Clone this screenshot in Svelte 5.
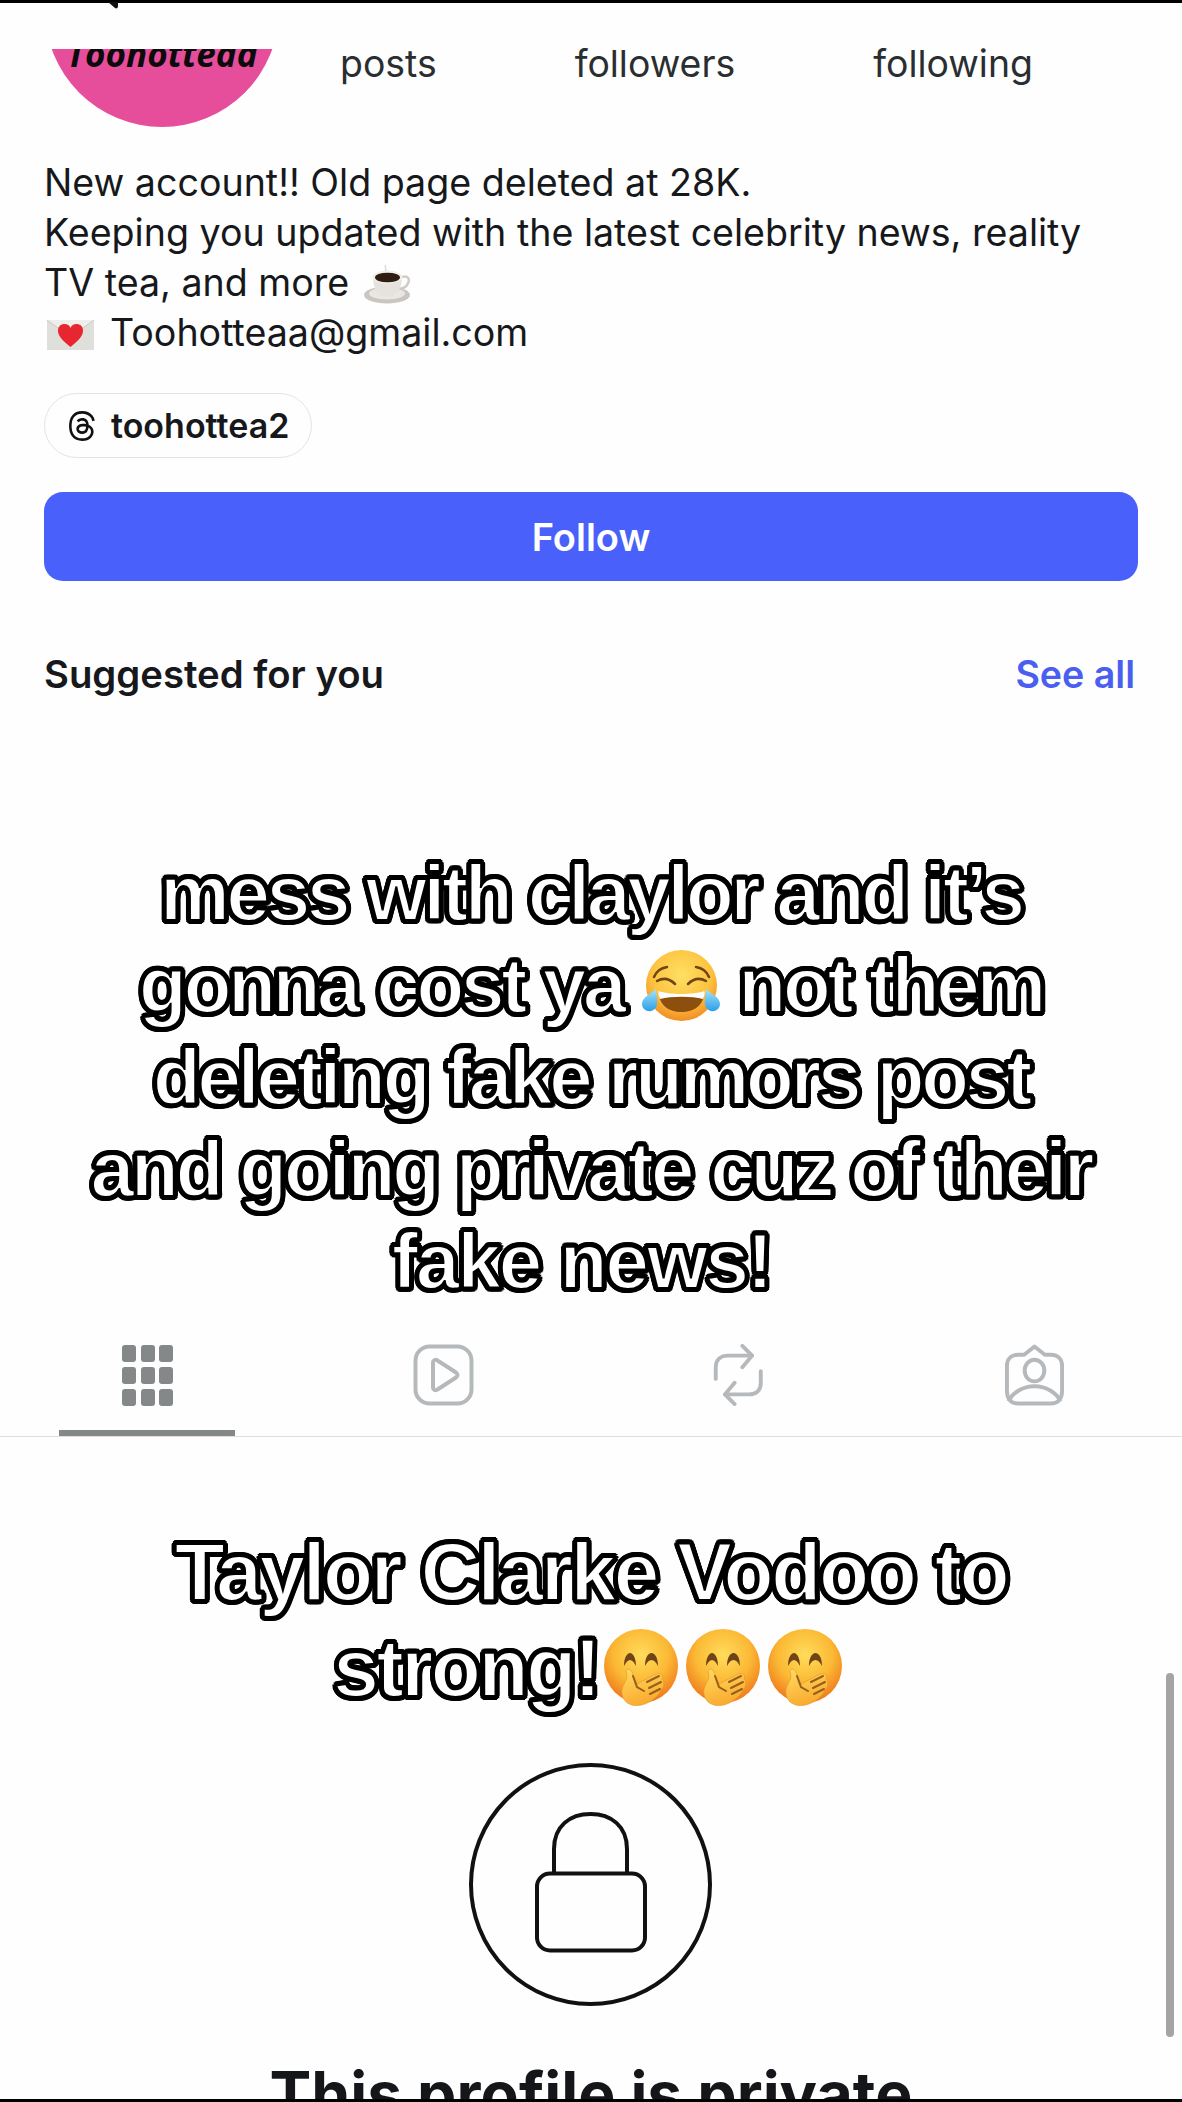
<script>
  const threads = "M141.537 88.9883C140.71 88.5919 139.87 88.2104 139.019 87.8451C137.537 60.5382 122.616 44.905 97.5619 44.745C97.4484 44.7443 97.3355 44.7443 97.222 44.7443C82.2364 44.7443 69.7731 51.1409 62.102 62.7807L75.881 72.2328C81.6116 63.5383 90.6052 61.6848 97.2286 61.6848C97.3051 61.6848 97.3819 61.6848 97.4576 61.6855C105.707 61.7381 111.932 64.1366 115.961 68.814C118.893 72.2193 120.854 76.925 121.825 82.8638C114.511 81.6207 106.601 81.2385 98.145 81.7233C74.3247 83.0954 59.0111 96.9879 60.0396 116.292C60.5615 126.084 65.4397 134.508 73.775 140.011C80.8224 144.663 89.899 146.938 99.3323 146.423C111.79 145.74 121.563 140.987 128.381 132.296C133.559 125.696 136.834 117.143 138.28 106.366C144.217 109.949 148.617 114.664 151.047 120.332C155.179 129.967 155.42 145.8 142.501 158.708C131.182 170.016 117.576 174.908 97.0135 175.059C74.2042 174.89 56.9538 167.575 45.7381 153.317C35.2355 139.966 29.8077 120.682 29.6052 96C29.8077 71.3178 35.2355 52.0336 45.7381 38.6827C56.9538 24.4249 74.2039 17.11 97.0132 16.9405C119.988 17.1113 137.539 24.4614 149.184 38.788C154.894 45.8136 159.199 54.6488 162.037 64.9503L178.184 60.6422C174.744 47.9622 169.331 37.0357 161.965 27.974C147.036 9.60668 125.202 0.195148 97.0695 0H96.9569C68.8816 0.19447 47.2921 9.6418 32.7883 28.0793C19.8819 44.4864 13.2244 67.3157 13.0007 95.9325L13 96L13.0007 96.0675C13.2244 124.684 19.8819 147.514 32.7883 163.921C47.2921 182.358 68.8816 191.806 96.9569 192H97.0695C122.03 191.827 139.624 185.292 154.118 170.811C173.081 151.866 172.51 128.119 166.26 113.541C161.776 103.087 153.227 94.5962 141.537 88.9883ZM98.4405 129.507C88.0005 130.095 77.1544 125.409 76.6196 115.372C76.2232 107.93 81.9158 99.626 99.0812 98.6368C101.047 98.5234 102.976 98.468 104.871 98.468C111.106 98.468 116.939 99.0737 122.242 100.233C120.264 124.935 108.662 128.946 98.4405 129.507Z";
  const grid = [0, 1, 2, 3, 4, 5, 6, 7, 8];
</script>

{#snippet hand()}
  <svg class="hand" viewBox="0 0 74 77" aria-hidden="true">
    <defs>
      <radialGradient id="hf" cx="50%" cy="35%" r="62%">
        <stop offset="0" stop-color="#ffdc5c" />
        <stop offset="0.6" stop-color="#fbb934" />
        <stop offset="1" stop-color="#f0801f" />
      </radialGradient>
      <linearGradient id="hh" x1="0" y1="0" x2="0.4" y2="1">
        <stop offset="0" stop-color="#ffdc62" />
        <stop offset="1" stop-color="#f9ab2f" />
      </linearGradient>
    </defs>
    <ellipse cx="37" cy="37" rx="37" ry="37" fill="url(#hf)" />
    <path d="M20 37C20 29 23 24 26 24C29 24 32 29 32 37C30 33 28 31 26 31C24 31 22 33 20 37Z" fill="#6f4417" />
    <path d="M41 37C41 29 44 24 47.500 24C51 24 54 29 54 37C52 33 50 31 47.500 31C45 31 43 33 41 37Z" fill="#6f4417" />
    <path d="M22 42C24 38 28 41 29 46L33 55L52 45C56 43 60 46 58 50C61 53 60 58 57 61C53 70 39 79 28 76C20 74 17 67 18 60C19 56 22 52 23 48Z" fill="url(#hh)" stroke="#e8902b" stroke-width="0.6" />
    <g stroke="#96601a" stroke-width="2" stroke-linecap="round" fill="none">
      <path d="M43 53L55 47" />
      <path d="M45 59L57 53" />
      <path d="M46 65L56 60" />
      <path d="M29 47L33 58L40 62" />
    </g>
  </svg>
{/snippet}

<div class="page">
  <div class="bar"></div>
  <svg class="notch" viewBox="0 0 10 7" aria-hidden="true"><path d="M0 0L7 6C8.500 7 10 6 10 4L10 0Z" fill="#111" /></svg>

  <header class="head">
    <div class="avatar">
      <div class="disc"><span>Toohotteaa</span></div>
    </div>
    <div class="stats">
      <span>posts</span>
      <span>followers</span>
      <span>following</span>
    </div>
  </header>

  <div class="bio">
    <p>New account!! Old page deleted at 28K.</p>
    <p>Keeping you updated with the latest celebrity news, reality</p>
    <p>TV tea, and more
      <svg class="coffee" viewBox="0 0 47 40" aria-hidden="true">
        <ellipse cx="23" cy="31" rx="23" ry="8.500" fill="#c9c6c1" />
        <ellipse cx="23" cy="29.500" rx="18" ry="6" fill="#e9e7e3" />
        <path d="M36 14C44 10 47 15 43 21C41 24 37 25 33 25" fill="none" stroke="#cfccc7" stroke-width="2.500" />
        <path d="M9 13C9 24 13 33 23 33C33 33 38 24 38 13Z" fill="#e6e3de" />
        <ellipse cx="23.500" cy="13" rx="15" ry="6.500" fill="#f1efeb" />
        <ellipse cx="23.500" cy="13.500" rx="12.500" ry="4.800" fill="#2f1c12" />
        <path d="M22 1C19 3 24 4 21 7" fill="none" stroke="#dcdcdc" stroke-width="1.500" />
      </svg>
    </p>
    <p class="mail">
      <svg class="env" viewBox="0 0 47 30" aria-hidden="true">
        <rect width="47" height="30" fill="#dfdfdc" />
        <path d="M0 0L23.500 17L47 0" fill="#eeeeea" stroke="#c9c9c6" stroke-width="1" />
        <path d="M23.500 27C15 20 11 16 11 10.500C11 6 14.500 4 17.500 4C20.500 4 22.500 5.500 23.500 8C24.500 5.500 26.500 4 29.500 4C32.500 4 36 6 36 10.500C36 16 32 20 23.500 27Z" fill="#e8262f" />
      </svg>
      <span>Toohotteaa@gmail.com</span>
    </p>
  </div>

  <div class="pill">
    <svg class="threads" viewBox="0 0 192 192" aria-hidden="true"><path d={threads} fill="#111" /></svg>
    <span>toohottea2</span>
  </div>

  <button class="follow" type="button">Follow</button>

  <div class="suggest">
    <span class="s-title">Suggested for you</span>
    <span class="s-link">See all</span>
  </div>

  <div class="cap cap-one">
    <div>mess with claylor and it’s</div>
    <div>gonna cost ya
      <svg class="joy" viewBox="0 0 78 71" aria-hidden="true">
        <defs>
          <radialGradient id="jf" cx="50%" cy="35%" r="65%">
            <stop offset="0" stop-color="#ffe064" />
            <stop offset="0.65" stop-color="#fcc23e" />
            <stop offset="1" stop-color="#f28c25" />
          </radialGradient>
          <linearGradient id="jt" x1="0" y1="0" x2="0" y2="1">
            <stop offset="0" stop-color="#a6e3fb" />
            <stop offset="1" stop-color="#2c9fe6" />
          </linearGradient>
        </defs>
        <circle cx="39.500" cy="35.500" r="35.500" fill="url(#jf)" />
        <path d="M17 43C27 46 52 46 62 43C62 55 52 62 39.500 62C27 62 17 55 17 43Z" fill="#8d4f0e" />
        <path d="M16.500 41C27 45 52 45 62.500 41C63 44 62 47 61 49C50 46 29 46 18 49C17 47 16 44 16.500 41Z" fill="#fff" />
        <g fill="none" stroke="#6f4417" stroke-width="2.500" stroke-linecap="round">
          <path d="M15 31C22 27 28 29 33 34" />
          <path d="M12 27C14 22 19 18 25 17" />
          <path d="M64 31C57 27 51 29 46 34" />
          <path d="M67 27C65 22 60 18 54 17" />
        </g>
        <path d="M14 39C9 44 0 47 0 54C0 59 5 62 9 61C13 60 16 56 15 50Z" fill="url(#jt)" />
        <path d="M64 39C69 44 78 47 78 54C78 59 73 62 69 61C65 60 62 56 63 50Z" fill="url(#jt)" />
      </svg>
      not them</div>
    <div>deleting fake rumors post</div>
    <div class="wide">and going private cuz of their</div>
    <div class="last">fake news!</div>
  </div>

  <nav class="tabs">
    <div class="tab active">
      <div class="gridicon">
        {#each grid as g (g)}<i></i>{/each}
      </div>
      <b></b>
    </div>
    <div class="tab">
      <svg class="ic" viewBox="0 0 61 62" aria-hidden="true">
        <rect x="2.500" y="2.500" width="56" height="57" rx="14" fill="none" stroke="#b6b9bc" stroke-width="4" />
        <path d="M20 18.500C20 16 22.500 15 24.500 16.500L43 28.500C45 30 45 32 43 33.500L24.500 45.500C22.500 47 20 46 20 43.500Z" fill="none" stroke="#b6b9bc" stroke-width="4" stroke-linejoin="round" />
      </svg>
    </div>
    <div class="tab">
      <svg class="ic" viewBox="0 0 52 64" aria-hidden="true">
        <g fill="none" stroke="#b6b9bc" stroke-width="4" stroke-linecap="round" stroke-linejoin="round">
          <path d="M2.500 36V24C2.500 16 8 12 15 12H40" />
          <path d="M30 2L40 12L30 24" />
          <path d="M49 28V40C49 48 44 52 37 52H12" />
          <path d="M22 40L12 52L22 62" />
        </g>
      </svg>
    </div>
    <div class="tab">
      <svg class="ic" viewBox="0 0 61 63" aria-hidden="true">
        <g fill="none" stroke="#b6b9bc" stroke-width="4" stroke-linejoin="round">
          <path d="M14 11H20L30.500 2.500L41 11H47C54 11 58.500 15 58.500 22V48C58.500 56 54 60.500 47 60.500H14C7 60.500 2.500 56 2.500 48V22C2.500 15 7 11 14 11Z" />
          <ellipse cx="30.500" cy="27" rx="10" ry="11" />
          <path d="M4 58C8 50 18 43 30.500 43C43 43 53 50 57 58" />
        </g>
      </svg>
    </div>
  </nav>

  <div class="cap cap-two">
    <div>Taylor Clarke Vodoo to</div>
    <div>strong!<span class="hands">{@render hand()}{@render hand()}{@render hand()}</span></div>
  </div>

  <div class="lock">
    <svg viewBox="0 0 243 243" aria-hidden="true">
      <circle cx="121.500" cy="121.500" r="119.500" fill="none" stroke="#111" stroke-width="4" />
      <path d="M85 110V86C85 63 101 51 121.500 51C142 51 158 63 158 86V110" fill="none" stroke="#111" stroke-width="4" />
      <rect x="68" y="110.500" width="108" height="77" rx="13" fill="none" stroke="#111" stroke-width="4" />
    </svg>
  </div>

  <h2 class="private">This profile is private</h2>

  <div class="scroll"></div>
  <div class="bar bottom"></div>
</div>

<style>
  :global(body) {
    margin: 0;
    background: #fefefe;
  }
  .page {
    position: relative;
    width: 1182px;
    height: 2102px;
    overflow: hidden;
    background: #fefefe;
    color: #16181b;
    font-family: Inter, "Liberation Sans", sans-serif;
  }
  .bar {
    height: 3px;
    background: #000;
  }
  .bottom {
    position: absolute;
    left: 0;
    right: 0;
    bottom: 0;
  }
  .notch {
    position: absolute;
    left: 108px;
    top: 2px;
    width: 10px;
    height: 7px;
  }
  .head {
    display: flex;
    align-items: flex-start;
    margin-top: 46px;
    height: 78px;
  }
  .avatar {
    width: 234px;
    height: 78px;
    margin-left: 45px;
    overflow: hidden;
    flex: none;
  }
  .disc {
    position: relative;
    width: 234px;
    height: 234px;
    margin-top: -156px;
    border-radius: 50%;
    background: #e64d9b;
  }
  .disc span {
    position: absolute;
    left: 0;
    right: 0;
    top: 143px;
    text-align: center;
    font: italic 700 35px/1 "Open Sans", sans-serif;
    color: #0b0b0b;
    white-space: nowrap;
  }
  .stats {
    display: flex;
    gap: 138px;
    margin-left: 61px;
    font-size: 37.400px;
    line-height: 30px;
    color: #2b2e31;
  }
  .bio {
    margin: 31px 0 0 44px;
    font-size: 37.600px;
    line-height: 50px;
  }
  .bio p {
    margin: 0;
    height: 50px;
    white-space: nowrap;
  }
  .coffee {
    width: 47px;
    height: 40px;
    vertical-align: -8px;
    margin-left: 4px;
  }
  .mail {
    display: flex;
    align-items: center;
  }
  .env {
    width: 47px;
    height: 30px;
    margin: 3px 0 0 3px;
    flex: none;
  }
  .mail span {
    margin-left: 16px;
  }
  .pill {
    display: flex;
    align-items: center;
    box-sizing: border-box;
    width: 268px;
    height: 65px;
    margin: 35px 0 0 44px;
    padding-left: 22px;
    border: 1.500px solid #e4e4e4;
    border-radius: 33px;
    font-size: 34px;
    font-weight: 600;
  }
  .threads {
    width: 30px;
    height: 30px;
    flex: none;
  }
  .pill span {
    margin-left: 14px;
  }
  .follow {
    display: block;
    width: 1094px;
    height: 89px;
    margin: 34px 0 0 44px;
    border: 0;
    border-radius: 19px;
    background: #4a60fb;
    color: #fff;
    font: 600 38px/1 Inter, sans-serif;
  }
  .suggest {
    display: flex;
    justify-content: space-between;
    align-items: center;
    height: 50px;
    margin: 68px 47px 0 44px;
  }
  .s-title {
    font-size: 38.300px;
    font-weight: 600;
  }
  .s-link {
    font-size: 37.600px;
    font-weight: 600;
    color: #4a5ff0;
  }
  .cap {
    text-align: center;
    color: #fff;
    font-family: "Liberation Sans", Arial, sans-serif;
    font-weight: 700;
    white-space: nowrap;
    -webkit-text-stroke: 2px #000;
    text-shadow:
      4px 0 0 #000, 3.700px 1.500px 0 #000, 2.800px 2.800px 0 #000, 1.500px 3.700px 0 #000,
      0 4px 0 #000, -1.500px 3.700px 0 #000, -2.800px 2.800px 0 #000, -3.700px 1.500px 0 #000,
      -4px 0 0 #000, -3.700px -1.500px 0 #000, -2.800px -2.800px 0 #000, -1.500px -3.700px 0 #000,
      0 -4px 0 #000, 1.500px -3.700px 0 #000, 2.800px -2.800px 0 #000, 3.700px -1.500px 0 #000;
  }
  .cap-one {
    margin-top: 148px;
    font-size: 78px;
    line-height: 92px;
    letter-spacing: -3.100px;
  }
  .wide {
    letter-spacing: -2.900px;
  }
  .last {
    letter-spacing: -2px;
    padding-right: 19px;
  }
  .cap-two {
    margin-top: 87px;
    font-size: 82px;
    line-height: 96px;
    letter-spacing: -2.400px;
  }
  .joy {
    width: 78px;
    height: 71px;
    vertical-align: -9px;
  }
  .hands {
    display: inline-flex;
    gap: 8px;
    margin: 0 7px 0 5px;
    vertical-align: -10px;
  }
  .hand {
    width: 74px;
    height: 77px;
    display: block;
  }
  .tabs {
    display: grid;
    grid-template-columns: repeat(4, 1fr);
    height: 93px;
    margin-top: 36px;
    border-bottom: 1.500px solid #dedede;
  }
  .tab {
    position: relative;
    display: flex;
    justify-content: center;
    align-items: flex-start;
  }
  .tab b {
    position: absolute;
    left: 59px;
    width: 176px;
    bottom: 0;
    height: 6px;
    background: #858888;
  }
  .gridicon {
    display: grid;
    grid-template-columns: repeat(3, 14px);
    grid-auto-rows: 17px;
    gap: 5px 4.500px;
    margin-top: 2px;
  }
  .gridicon i {
    background: #858888;
    border-radius: 3px;
  }
  .ic {
    height: 62px;
    width: 61px;
    margin-top: 1px;
  }
  .lock {
    width: 243px;
    height: 243px;
    margin: 47px 0 0 469px;
  }
  .lock svg {
    display: block;
    width: 243px;
    height: 243px;
  }
  .private {
    margin: 53px 0 0;
    text-align: center;
    font-size: 62.600px;
    line-height: 70px;
    font-weight: 700;
    color: #14161a;
    white-space: nowrap;
  }
  .scroll {
    position: absolute;
    left: 1166px;
    top: 1673px;
    width: 8px;
    height: 364px;
    border-radius: 4px;
    background: #a4a4a4;
  }
</style>
